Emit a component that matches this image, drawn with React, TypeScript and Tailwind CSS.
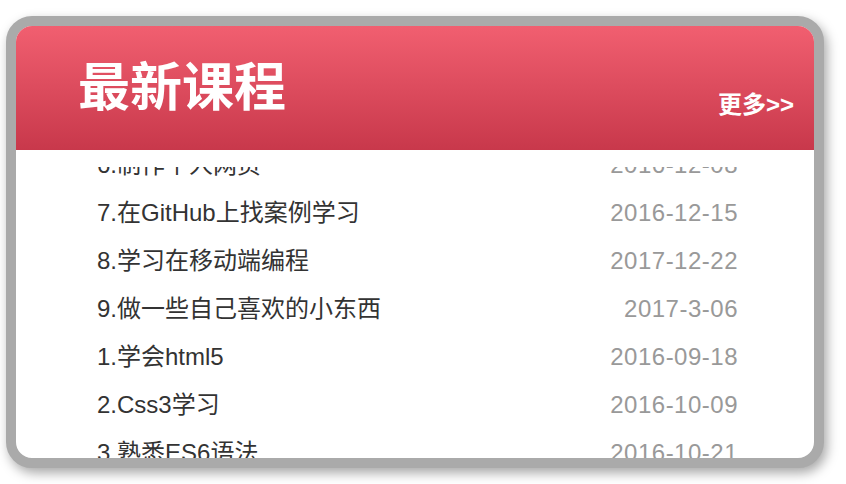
const courses = [
  { title: '6.制作个人网页', date: '2016-12-08' },
  { title: '7.在GitHub上找案例学习', date: '2016-12-15' },
  { title: '8.学习在移动端编程', date: '2017-12-22' },
  { title: '9.做一些自己喜欢的小东西', date: '2017-3-06' },
  { title: '1.学会html5', date: '2016-09-18' },
  { title: '2.Css3学习', date: '2016-10-09' },
  { title: '3.熟悉ES6语法', date: '2016-10-21' },
];

export default function App() {
  return (
    <div className="min-h-screen bg-white pl-[6px] pt-[16px] font-['Liberation_Sans','Noto_Sans_CJK_SC',sans-serif]">
      <div className="flex h-[452px] w-[818px] flex-col overflow-hidden rounded-[26px] border-[10px] border-[#aaaaaa] bg-white shadow-[3px_5px_12px_rgba(0,0,0,0.35)]">
        <div className="flex h-[124px] shrink-0 items-center justify-between bg-[linear-gradient(180deg,#f15f70,#c8384b)] pl-[62px] pr-[20px]">
          <h1 className="text-[52px] font-bold leading-none text-white">最新课程</h1>
          <a className="mt-[34px] text-[24px] font-bold leading-none text-white">更多&gt;&gt;</a>
        </div>
        <div className="flex flex-1 flex-col pt-[17px]">
          <div className="flex-1 overflow-hidden">
            <ul className="-mt-[26px] pl-[81px] pr-[76px]">
              {courses.map(course => (
                <li
                  key={course.title}
                  className="flex h-[48px] items-center justify-between text-[24px] leading-[48px]"
                >
                  <span className="text-[#333333]">{course.title}</span>
                  <span className="tracking-[0.5px] text-[#999999]">{course.date}</span>
                </li>
              ))}
            </ul>
          </div>
        </div>
      </div>
    </div>
  );
}
